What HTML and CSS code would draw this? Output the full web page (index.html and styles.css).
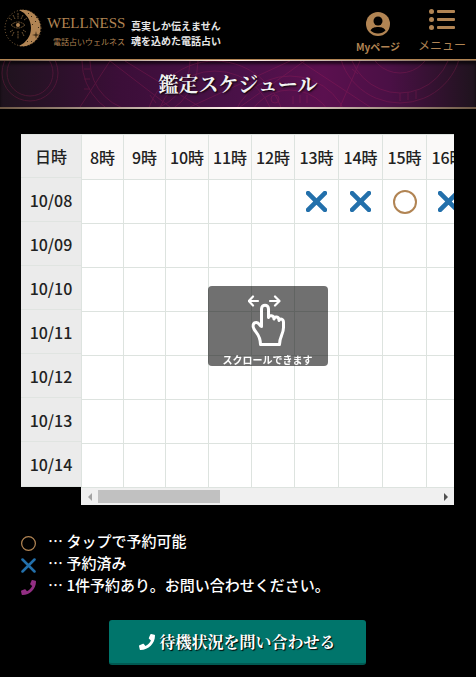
FILE: index.html
```html
<!DOCTYPE html>
<html lang="ja">
<head>
  <meta charset="UTF-8">
  <meta name="viewport" content="width=device-width, initial-scale=1">
  <title>鑑定スケジュール</title>
  <link rel="stylesheet" href="styles.css">
</head>
<body>
  <svg class="sprite" aria-hidden="true">
    <symbol id="cross" viewBox="0 0 20 20"><path d="M2 2L18 18M18 2L2 18" fill="none" stroke="currentColor" stroke-width="4.400" stroke-linecap="round"/></symbol>
    <symbol id="cross-thin" viewBox="0 0 20 20"><path d="M2 2L18 18M18 2L2 18" fill="none" stroke="currentColor" stroke-width="3.400" stroke-linecap="round"/></symbol>
    <symbol id="circle" viewBox="0 0 24 24"><circle cx="12" cy="12" r="11" fill="none" stroke="currentColor" stroke-width="2"/></symbol>
    <symbol id="phone" viewBox="0 0 512 512"><path fill="currentColor" d="M493 25L389 1c-11-3-23 3-27 14l-48 112c-4 10-1 21 7 28l61 50c-36 76-99 139-177 177l-50-61c-7-8-18-11-28-7L15 362c-11 4-17 16-14 27l24 104c3 11 12 19 24 19 256 0 463-207 463-463 0-12-8-21-19-24z"/></symbol>
  </svg>

  <header class="header">
    <a class="logo" href="#">
      <svg class="logo-moon" viewBox="0 0 38 38" aria-hidden="true">
        <circle cx="19" cy="19" r="18" fill="none" stroke="#8a683f" stroke-width="1" stroke-dasharray="1 2"/>
        <path fill="#b18453" d="M15 1a18.300 18.300 0 1 1 0 36a19.500 19.500 0 0 0 0-36z"/>
        <g fill="none" stroke="#8a683f" stroke-width=".8">
          <path d="M7 16q7-6 14 0q-7 6-14 0zM14 4v6M14 22v8M5 9l3 2M20 11l3-2M6 23l3-2M19 21l3 2M9 6l2 4M19 6l-2 4M10 23l-2 4M18 23l2 4" stroke-dasharray="2 .6"/>
        </g>
        <circle cx="14" cy="16" r="2" fill="#b18453"/>
        <path fill="#3a2915" d="M32 22l.7 3.300 3.300.7-3.300.7L32 30l-.7-3.300L28 26l3.300-.7zM27 7h1v1h-1zM31 12h1v1h-1zM28 15h1v1h-1zM34 18h1v1h-1zM23 32h1v1h-1zM27 32h1v1h-1zM24 4h1v1h-1zM32 8h1v1h-1z"/>
      </svg>
      <span class="logo-text">
        <span class="logo-name">WELLNESS</span>
        <span class="logo-kana">電話占いウェルネス</span>
      </span>
    </a>
    <p class="tagline">真実しか伝えません<br>魂を込めた電話占い</p>
    <nav class="nav">
      <a class="nav-mypage" href="#">
        <svg viewBox="0 0 24 24" width="24" height="24" aria-hidden="true">
          <circle cx="12" cy="12" r="12" fill="currentColor"/>
          <circle cx="12" cy="9" r="4.500" fill="#000"/>
          <path d="M4.500 18.500C6 15.500 9 15 12 15s6 .5 7.500 3.500C17.500 20.500 15 21.500 12 21.500s-5.500-1-7.500-3z" fill="#000"/>
        </svg>
        <span>Myページ</span>
      </a>
      <button class="nav-menu" type="button">
        <svg viewBox="0 0 26 21" width="26" height="21" aria-hidden="true" fill="currentColor">
          <circle cx="2.500" cy="2.500" r="2.500"/><circle cx="2.500" cy="10.500" r="2.500"/><circle cx="2.500" cy="18.500" r="2.500"/>
          <rect x="8" y="1" width="18" height="3" rx="1"/><rect x="8" y="9" width="18" height="3" rx="1"/><rect x="8" y="17" width="18" height="3" rx="1"/>
        </svg>
        <span>メニュー</span>
      </button>
    </nav>
  </header>

  <div class="title-bar">
    <svg class="title-pattern" viewBox="0 0 476 46" preserveAspectRatio="xMidYMid slice" aria-hidden="true" fill="none" stroke="#b52460">
      <circle cx="140" cy="0" r="58"/><circle cx="140" cy="0" r="50"/>
      <circle cx="30" cy="12" r="28"/><circle cx="30" cy="12" r="23"/>
      <circle cx="215" cy="70" r="70"/><circle cx="215" cy="70" r="60"/>
      <circle cx="290" cy="75" r="60"/><circle cx="290" cy="75" r="46"/>
      <circle cx="400" cy="-20" r="62"/><circle cx="400" cy="-20" r="52"/><circle cx="400" cy="-20" r="32"/>
      <circle cx="275" cy="38" r="4"/>
      <path d="M110 0L170 46M125 0L200 46M190 46L290 0M300 0L370 46M240 46L310 -4M360 0L340 46M80 46L110 0M352 8l6 5M150 34l6 8M293 35v8M300 34v8M307 34v8M400 32v8M408 31v8M416 30v8M84 8h6M84 18h6M84 28h6"/>
    </svg>
    <h1>鑑定スケジュール</h1>
  </div>

  <main class="container">
    <div class="schedule">
      <table class="dates">
        <thead><tr><th scope="col">日時</th></tr></thead>
        <tbody>
          <tr><th scope="row">10/08</th></tr>
          <tr><th scope="row">10/09</th></tr>
          <tr><th scope="row">10/10</th></tr>
          <tr><th scope="row">10/11</th></tr>
          <tr><th scope="row">10/12</th></tr>
          <tr><th scope="row">10/13</th></tr>
          <tr><th scope="row">10/14</th></tr>
        </tbody>
      </table>
      <div class="times-wrap">
        <div class="times-scroll" id="timesScroll">
          <table class="times">
            <thead><tr id="hours"></tr></thead>
            <tbody id="slots"></tbody>
          </table>
        </div>
        <div class="scrollbar">
          <button class="scroll-prev" id="scrollPrev" type="button" aria-label="前へ"></button>
          <div class="scroll-track"><div class="scroll-thumb" id="scrollThumb"></div></div>
          <button class="scroll-next" id="scrollNext" type="button" aria-label="次へ"></button>
        </div>
        <div class="scroll-hint">
          <svg viewBox="0 0 40 54" width="40" height="54" aria-hidden="true" fill="none" stroke="#fff" stroke-width="3" stroke-linecap="round" stroke-linejoin="round">
            <path d="M10 7H1M5 2.500L.8 7L5 11.500M22 7h9M27 2.500L31.500 7L27 11.500" stroke-width="2.200"/>
            <path d="M12.500 50.500h19c0-8 4-10 4-17v-5c0-4-3.500-4.500-4.500-2c0-4.500-4.500-4.500-5-1.500c0-4-5-4-5.500-1.500v-8.500c0-5-7-5-7 0v17.500c-2 0-2-4-5-4c-4 0-4 4-2.500 6.500c2 4 6.500 6 6.500 15.500z"/>
          </svg>
          <span>スクロールできます</span>
        </div>
      </div>
    </div>

    <ul class="legend">
      <li><svg class="mark-open"><use href="#circle"/></svg>… タップで予約可能</li>
      <li><svg class="mark-booked"><use href="#cross-thin"/></svg>… 予約済み</li>
      <li><svg class="mark-phone"><use href="#phone"/></svg>… 1件予約あり。お問い合わせください。</li>
    </ul>

    <a class="contact" href="#"><svg><use href="#phone"/></svg>待機状況を問い合わせる</a>
  </main>

  <script src="script.js"></script>
</body>
</html>
```
FILE: styles.css
```css
* {
  box-sizing: border-box;
}

body {
  margin: 0;
  background: #000;
  color: #fff;
  font-family: "Noto Sans CJK JP", sans-serif;
  font-size: 15px;
}

a {
  color: inherit;
  text-decoration: none;
}

.sprite {
  display: none;
}

/* header */
.header {
  display: flex;
  align-items: flex-start;
  height: 60px;
  padding: 9px 10px 0 4px;
  border-bottom: 1px solid #b18453;
  color: #b18453;
}

.logo {
  display: flex;
  gap: 5px;
}

.logo-moon {
  width: 38px;
  height: 38px;
}

.logo-text {
  display: flex;
  flex-direction: column;
  width: 78px;
}

.logo-name {
  font-family: "Liberation Serif", serif;
  font-size: 15px;
  line-height: 28px;
}

.logo-kana {
  font-size: 8px;
  line-height: 10px;
  text-align: right;
  white-space: nowrap;
}

.tagline {
  margin: 9px 0 0 6px;
  color: #e6e6e6;
  font-size: 10px;
  font-weight: 700;
  line-height: 15px;
  white-space: nowrap;
}

.nav {
  display: flex;
  gap: 18px;
  margin-left: auto;
}

.nav-mypage,
.nav-menu {
  display: flex;
  flex-direction: column;
  align-items: center;
  white-space: nowrap;
}

.nav-mypage {
  padding-top: 3px;
  font-size: 10px;
  font-weight: 700;
  line-height: 22px;
}

.nav-menu {
  gap: 4px;
  padding: 0;
  border: 0;
  background: none;
  color: inherit;
  font-family: inherit;
  font-size: 12px;
  line-height: 22px;
  cursor: pointer;
}

/* page title */
.title-bar {
  position: relative;
  display: flex;
  align-items: center;
  justify-content: center;
  height: 49px;
  background: linear-gradient(90deg, #1e131d, #3b0e38 25%, #4a1148 50%, #5b104f 68%, #4a1045 82%, #1e131d);
  border: solid;
  border-width: 1px 0 2px;
  border-image: linear-gradient(90deg, #6d5744, #fff0ec 50%, #6d5744) 1;
  box-shadow: inset 0 3px 3px rgba(0, 0, 0, 0.6);
}

.title-pattern {
  position: absolute;
  inset: 0;
  width: 100%;
  height: 100%;
  opacity: 0.25;
}

.title-bar h1 {
  position: relative;
  margin: 0;
  color: #f2f2f2;
  font-family: "Noto Serif CJK JP", "Noto Serif JP", "Noto Sans CJK JP", serif;
  font-size: 20px;
  font-weight: 700;
  line-height: 30px;
  text-shadow: 1px 1px 2px #000;
}

/* schedule */
.container {
  padding: 25px 22px 12px 21px;
}

.schedule {
  display: flex;
  align-items: flex-start;
}

.schedule table {
  border-spacing: 0;
  color: #222;
  font-size: 16px;
}

.schedule th {
  font-weight: 500;
}

.schedule th,
.schedule td {
  padding: 0;
  text-align: center;
  vertical-align: middle;
}

.dates th {
  width: 60px;
  height: 44px;
  background: #ebebeb;
  border-bottom: 1px solid #e0e4e1;
}

.dates tr:last-child th {
  height: 45px;
}

.dates thead tr:last-child th {
  height: 44px;
  border-top: 1px solid #e0e4e1;
}

.times-wrap {
  position: relative;
  flex: 1;
  min-width: 0;
}

.times-scroll {
  overflow-x: auto;
  scrollbar-width: none;
}

.times {
  table-layout: fixed;
  width: 1034px;
  background: #fff;
}

.times th,
.times td {
  width: 43px;
  height: 44px;
  border-left: 1px solid #dde3df;
  border-bottom: 1px solid #dde3df;
  white-space: nowrap;
}

.times th {
  height: 46px;
  background: #faf9f8;
  border-top: 1px solid #dde3df;
}

.times .narrow {
  width: 42px;
}

.times .wide {
  width: 44px;
}

.times svg {
  display: block;
  margin: auto;
}

.times .mark-booked {
  width: 21px;
  height: 21px;
}

.times .mark-open {
  width: 24px;
  height: 24px;
}

.mark-open {
  color: #b18453;
}

.mark-booked {
  color: #2370ab;
}

.mark-phone {
  color: #922e83;
}

.scrollbar {
  display: flex;
  align-items: center;
  height: 17px;
  background: #f0f0f0;
}

.scrollbar button {
  display: flex;
  align-items: center;
  justify-content: center;
  width: 17px;
  height: 17px;
  padding: 0;
  border: 0;
  background: none;
}

.scrollbar button::before {
  content: '';
  border: 4px solid transparent;
}

.scrollbar .scroll-prev::before {
  border-right-color: #a3a3a3;
  border-left-width: 0;
}

.scrollbar .scroll-next::before {
  border-left-color: #505050;
  border-right-width: 0;
}

.scroll-track {
  flex: 1;
}

.scroll-thumb {
  height: 13px;
  background: #c1c1c1;
}

.scroll-hint {
  position: absolute;
  top: 152px;
  left: 50%;
  display: flex;
  flex-direction: column;
  align-items: center;
  width: 120px;
  height: 80px;
  margin-left: -60px;
  padding-top: 8px;
  border-radius: 4px;
  background: rgba(0, 0, 0, 0.56);
  font-size: 10px;
  font-weight: 700;
  line-height: 24px;
  pointer-events: none;
}

.scroll-hint svg {
  flex: none;
}

/* legend */
.legend {
  margin: 25px 0 24px;
  padding: 0;
  list-style: none;
  font-weight: 500;
  line-height: 22px;
}

.legend li {
  display: flex;
  align-items: center;
  gap: 12px;
}

.legend svg {
  flex: none;
  width: 15px;
  height: 15px;
  margin-top: 4px;
}

.contact {
  display: flex;
  align-items: center;
  gap: 4px;
  width: max-content;
  height: 45px;
  margin: 0 auto;
  padding: 0 30px;
  border-bottom: 2px solid #005a52;
  border-radius: 3px;
  background: #00756b;
  font-family: "Noto Serif CJK JP", "Noto Serif JP", "Noto Sans CJK JP", serif;
  font-size: 16px;
  font-weight: 700;
  text-shadow: 1px 1px 1px #000;
}

.contact svg {
  width: 16px;
  height: 16px;
}
```
FILE: script.js
```js
const hours = document.getElementById('hours')
const slots = document.getElementById('slots')
const scroller = document.getElementById('timesScroll')
const thumb = document.getElementById('scrollThumb')
const booked = [13, 14, 16]
const open = [15]

function cellClass(hour) {
  if (hour < 10) return 'narrow'
  return hour >= 13 && hour <= 16 ? 'wide' : ''
}

function mark(hour) {
  if (booked.includes(hour)) return '<svg class="mark-booked"><use href="#cross"/></svg>'
  if (open.includes(hour)) return '<svg class="mark-open"><use href="#circle"/></svg>'
  return ''
}

for (let hour = 8; hour < 32; hour++) {
  hours.innerHTML += `<th scope="col" class="${cellClass(hour)}">${hour > 24 ? hour - 24 : hour}時</th>`
}

for (let day = 0; day < 7; day++) {
  let row = ''
  for (let hour = 8; hour < 32; hour++) {
    row += `<td>${day === 0 ? mark(hour) : ''}</td>`
  }
  slots.innerHTML += `<tr>${row}</tr>`
}

// scrollbar is always visible, also on phones
function updateThumb() {
  thumb.style.width = (scroller.clientWidth / scroller.scrollWidth * 100) + '%'
  thumb.style.marginLeft = (scroller.scrollLeft / scroller.scrollWidth * 100) + '%'
}

scroller.addEventListener('scroll', updateThumb)
window.addEventListener('resize', updateThumb)
document.getElementById('scrollPrev').addEventListener('click', () => scroller.scrollBy(-43, 0))
document.getElementById('scrollNext').addEventListener('click', () => scroller.scrollBy(43, 0))
updateThumb()
```
